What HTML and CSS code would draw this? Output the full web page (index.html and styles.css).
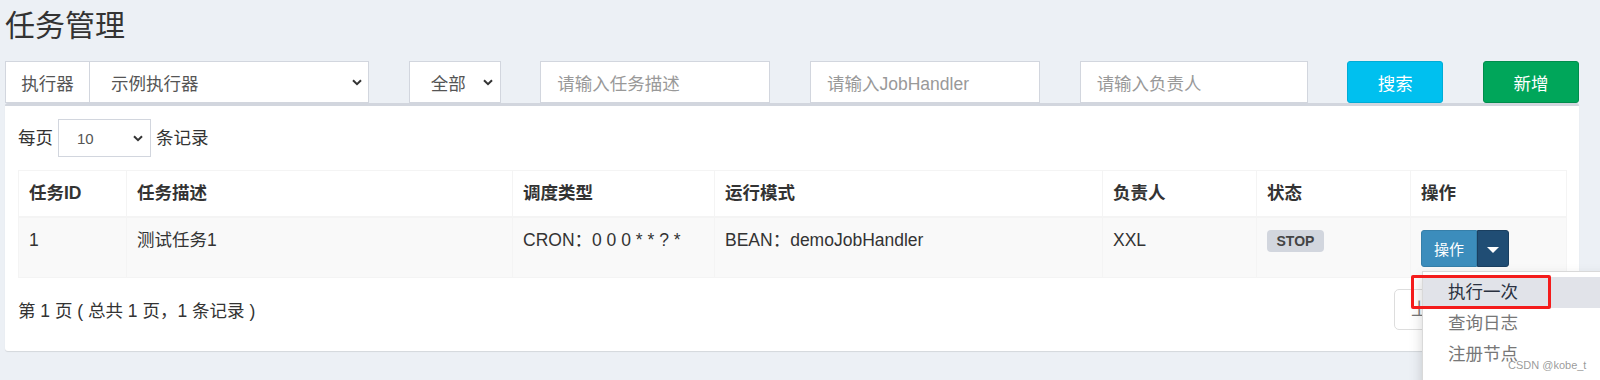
FILE: index.html
```html
<!DOCTYPE html>
<html lang="zh-CN">
<head>
    <meta charset="UTF-8">
    <title>任务管理</title>
    <link rel="stylesheet" href="styles.css">
</head>
<body>

    <!-- Cabecera -->
    <div class="content-header">
        <h1>任务管理</h1>
    </div>

    <section class="content">
        <!-- Filtros -->
        <div class="filter-row">
            <div class="exec-group">
                <span class="addon">执行器</span>
                <div class="select exec-select">
                    <span>示例执行器</span>
                    <svg class="chevron" width="10" height="7" viewBox="0 0 10 7"><path d="M1 1.2 L5 5.2 L9 1.2" fill="none" stroke="#333" stroke-width="2"/></svg>
                </div>
            </div>
            <div class="select status-select">
                <span>全部</span>
                <svg class="chevron" width="10" height="7" viewBox="0 0 10 7"><path d="M1 1.2 L5 5.2 L9 1.2" fill="none" stroke="#333" stroke-width="2"/></svg>
            </div>
            <div class="input desc-input">请输入任务描述</div>
            <div class="input handler-input">请输入JobHandler</div>
            <div class="input owner-input">请输入负责人</div>
            <button class="btn btn-info">搜索</button>
            <button class="btn btn-success">新增</button>
        </div>

        <!-- Tabla -->
        <div class="box">
            <div class="length">
                <span>每页</span>
                <div class="select length-select">
                    <span>10</span>
                    <svg class="chevron" width="10" height="7" viewBox="0 0 10 7"><path d="M1 1.2 L5 5.2 L9 1.2" fill="none" stroke="#333" stroke-width="2"/></svg>
                </div>
                <span>条记录</span>
            </div>

            <table class="job-table">
                <colgroup>
                    <col style="width:108px">
                    <col style="width:386px">
                    <col style="width:202px">
                    <col style="width:388px">
                    <col style="width:154px">
                    <col style="width:154px">
                    <col style="width:156px">
                </colgroup>
                <thead>
                    <tr>
                        <th>任务ID</th>
                        <th>任务描述</th>
                        <th>调度类型</th>
                        <th>运行模式</th>
                        <th>负责人</th>
                        <th>状态</th>
                        <th>操作</th>
                    </tr>
                </thead>
                <tbody>
                    <tr>
                        <td>1</td>
                        <td>测试任务1</td>
                        <td>CRON：0 0 0 * * ? *</td>
                        <td>BEAN：demoJobHandler</td>
                        <td>XXL</td>
                        <td><span class="label">STOP</span></td>
                        <td>
                            <div class="btn-group">
                                <button class="btn-op">操作</button>
                                <button class="btn-caret"><span class="caret"></span></button>
                                <!-- Menú desplegable abierto -->
                                <ul class="dropdown-menu">
                                    <li class="active">执行一次</li>
                                    <li>查询日志</li>
                                    <li>注册节点</li>
                                    <span class="mark"></span>
                                </ul>
                            </div>
                        </td>
                    </tr>
                </tbody>
            </table>

            <div class="table-foot">
                <div class="info">第 1 页 ( 总共 1 页，1 条记录 )</div>
                <ul class="pagination">
                    <li>上页</li>
                    <li>下页</li>
                </ul>
            </div>
        </div>
    </section>

    <div class="watermark">CSDN @kobe_t</div>

</body>
</html>
```

FILE: styles.css
```css
html {
    overflow: hidden;
}

body {
    margin: 0;
    min-height: 380px;
    background-color: #ecf0f5;
    font-family: "Liberation Sans", "Noto Sans CJK SC", sans-serif;
    font-size: 17.5px;
    color: #333;
}

.content-header h1 {
    margin: 0;
    padding: 9px 0 0 5px;
    font-size: 30px;
    line-height: 33px;
    font-weight: normal;
    color: #333;
}

.content {
    padding: 0 21px 0 5px;
}

/* Filtros */
.filter-row {
    display: flex;
    justify-content: space-between;
    margin-top: 19px;
    height: 42px;
}

.exec-group {
    display: flex;
    width: 364px;
}

.addon {
    width: 84px;
    box-sizing: border-box;
    border: 1px solid #d2d6de;
    border-right: none;
    background-color: #fff;
    color: #555;
    display: flex;
    align-items: center;
    justify-content: center;
}

.select {
    box-sizing: border-box;
    border: 1px solid #d2d6de;
    background-color: #fff;
    color: #555;
    display: flex;
    align-items: center;
    justify-content: space-between;
}

.exec-select {
    flex: 1;
    padding: 0 6px 0 21px;
}

.status-select {
    width: 92px;
    padding: 0 7px 0 21px;
}

.input {
    box-sizing: border-box;
    border: 1px solid #d2d6de;
    background-color: #fff;
    color: #999;
    padding: 0 16px;
    display: flex;
    align-items: center;
}

.desc-input,
.handler-input {
    width: 230px;
}

.owner-input {
    width: 228px;
}

.btn {
    width: 96px;
    height: 42px;
    border-radius: 3px;
    border: 1px solid transparent;
    color: #fff;
    font-family: inherit;
    font-size: 17.5px;
    padding: 0;
}

.btn-info {
    background-color: #00c0ef;
    border-color: #00acd6;
}

.btn-success {
    background-color: #00a65a;
    border-color: #008d4c;
}

/* Caja */
.box {
    background-color: #fff;
    border-top: 3px solid #d2d6de;
    border-radius: 3px;
    box-shadow: 0 1px 1px rgba(0, 0, 0, 0.1);
    padding: 13px 13px 21px 13px;
}

.length {
    display: flex;
    align-items: center;
    gap: 5px;
    height: 38px;
}

.length > span {
    margin-top: -4px;
}

.length-select {
    width: 93px;
    height: 38px;
    padding: 0 7px 0 18px;
    font-size: 15px;
}

.job-table {
    width: 100%;
    margin-top: 13px;
    border-collapse: collapse;
    table-layout: fixed;
    border: 1px solid #f4f4f4;
}

.job-table th,
.job-table td {
    border: 1px solid #f4f4f4;
    padding: 10px 10px;
    line-height: 25px;
    text-align: left;
    vertical-align: top;
}

.job-table th {
    font-weight: bold;
    border-bottom: 2px solid #f4f4f4;
}

.job-table tbody tr {
    background-color: #f9f9f9;
}

.label {
    display: inline-block;
    margin-top: 2px;
    background-color: #d2d6de;
    color: #444;
    font-size: 14px;
    font-weight: bold;
    line-height: 22px;
    padding: 0 9.5px;
    border-radius: 4px;
}

.btn-group {
    position: relative;
    display: flex;
    margin-top: 2px;
}

.btn-op,
.btn-caret {
    height: 37px;
    border: 1px solid #367fa9;
    color: #fff;
    font-family: inherit;
    font-size: 15px;
    padding: 0;
}

.btn-op {
    width: 56px;
    background-color: #3c8dbc;
    border-radius: 3px 0 0 3px;
}

.btn-caret {
    width: 32px;
    background-color: #204d74;
    border-color: #1a3f60;
    border-radius: 0 3px 3px 0;
}

.caret {
    display: inline-block;
    width: 0;
    height: 0;
    border-top: 6px solid #fff;
    border-left: 6px solid transparent;
    border-right: 6px solid transparent;
    vertical-align: middle;
}

/* Menú desplegable */
.dropdown-menu {
    position: absolute;
    top: 41px;
    left: 1px;
    z-index: 2;
    width: 200px;
    margin: 0;
    padding: 5px 0 20px 0;
    list-style: none;
    background-color: #fff;
    border: 1px solid rgba(0, 0, 0, 0.15);
    box-shadow: 0 6px 12px rgba(0, 0, 0, 0.175);
}

.dropdown-menu li {
    padding: 3px 25px;
    line-height: 25px;
    color: #777;
    font-size: 17.5px;
    white-space: nowrap;
}

.dropdown-menu li.active {
    background-color: #e1e3e9;
    color: #2a3140;
}

.mark {
    position: absolute;
    left: -12px;
    top: 3px;
    width: 140px;
    height: 34px;
    box-sizing: border-box;
    border: 3px solid #f41c1c;
    border-radius: 2px;
}

/* Pie de tabla */
.table-foot {
    display: flex;
    justify-content: space-between;
    align-items: center;
    margin-top: 11px;
    height: 41px;
}

.pagination {
    display: flex;
    margin: 0;
    padding: 0;
    list-style: none;
}

.pagination li {
    width: 86px;
    box-sizing: border-box;
    height: 41px;
    line-height: 39px;
    padding-left: 16px;
    border: 1px solid #ddd;
    color: #777;
}

.pagination li:first-child {
    border-radius: 5px 0 0 5px;
}

.pagination li:last-child {
    border-radius: 0 5px 5px 0;
    border-left: none;
}

.watermark {
    position: absolute;
    z-index: 3;
    left: 1508px;
    top: 359px;
    font-size: 11px;
    white-space: nowrap;
    color: rgba(120, 120, 120, 0.75);
}
```
